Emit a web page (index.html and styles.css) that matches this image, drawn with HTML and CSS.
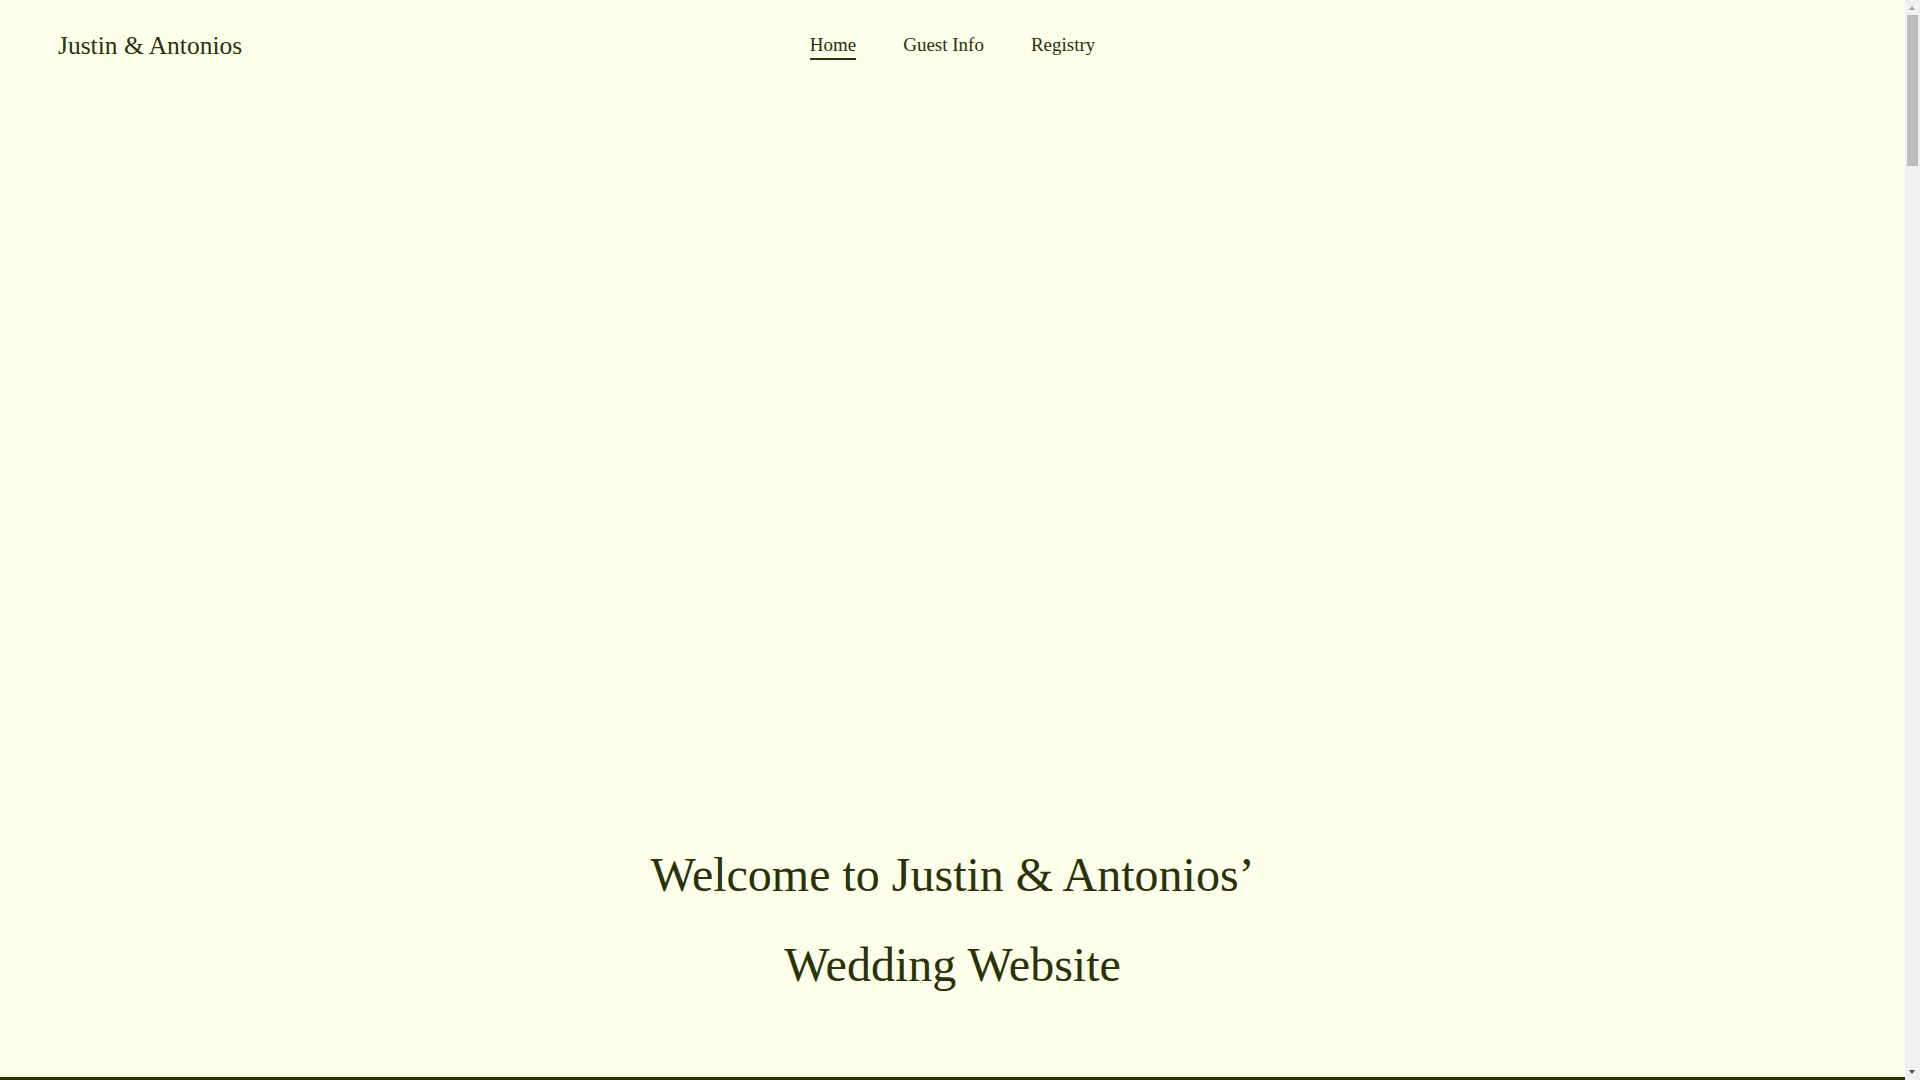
FILE: index.html
```html
<!DOCTYPE html>
<html lang="en">
<head>
<meta charset="utf-8">
<title>Justin &amp; Antonios</title>
<link rel="stylesheet" href="styles.css">
</head>
<body>
<div class="page">
  <div class="cover">
    <header class="site-header">
      <a class="brand" href="#">Justin &amp; Antonios</a>
      <nav class="main-nav">
        <a class="nav-link active" href="#">Home</a>
        <a class="nav-link" href="#">Guest Info</a>
        <a class="nav-link" href="#">Registry</a>
      </nav>
      <div class="spacer"></div>
    </header>
    <section class="hero">
      <h1 class="hero-title">Welcome to Justin &amp; Antonios’<br>Wedding Website</h1>
    </section>
  </div>
  <section class="story"></section>
</div>
<div class="fake-scrollbar" aria-hidden="true">
  <span class="sb-arrow sb-up"></span>
  <span class="sb-thumb"></span>
  <span class="sb-arrow sb-down"></span>
</div>
</body>
</html>
```

FILE: styles.css
```css
html, body {
  margin: 0;
  padding: 0;
}
body {
  background: #fdffeb;
  color: #2b3207;
  font-family: "Liberation Serif", "Times New Roman", serif;
}
.page {
  margin-right: 15px;
}
.cover {
  height: 1077px;
  display: flex;
  flex-direction: column;
}
.site-header {
  display: grid;
  grid-template-columns: 1fr auto 1fr;
  align-items: center;
  height: 92px;
  padding: 0 58px;
}
.brand {
  font-size: 25.5px;
  color: #2b3207;
  text-decoration: none;
  justify-self: start;
}
.main-nav {
  display: flex;
  gap: 47px;
  align-items: center;
}
.nav-link {
  font-size: 19px;
  color: #2b3207;
  text-decoration: none;
  padding-top: 1px;
  padding-bottom: 2px;
  border-bottom: 2px solid transparent;
}
.nav-link.active {
  border-bottom-color: #2b3207;
}
.hero {
  flex: 1;
  display: flex;
  flex-direction: column;
  justify-content: flex-end;
  align-items: center;
  padding-bottom: 67px;
}
.hero-title {
  margin: 0;
  font-weight: normal;
  font-size: 48px;
  line-height: 90px;
  text-align: center;
}
.story {
  background: #2a3106;
  height: 6430px;
}
.fake-scrollbar {
  position: fixed;
  top: 0;
  right: 0;
  width: 15px;
  height: 100vh;
  background: #f1f1f1;
}
.sb-thumb {
  position: absolute;
  top: 15px;
  left: 2px;
  width: 11px;
  height: 151px;
  background: #bdbdbd;
}
.sb-arrow {
  position: absolute;
  left: 4px;
  width: 0;
  height: 0;
  border-left: 3.5px solid transparent;
  border-right: 3.5px solid transparent;
}
.sb-up {
  top: 6px;
  border-bottom: 4px solid #a3a3a3;
}
.sb-down {
  bottom: 6px;
  border-top: 4px solid #505050;
}
```
